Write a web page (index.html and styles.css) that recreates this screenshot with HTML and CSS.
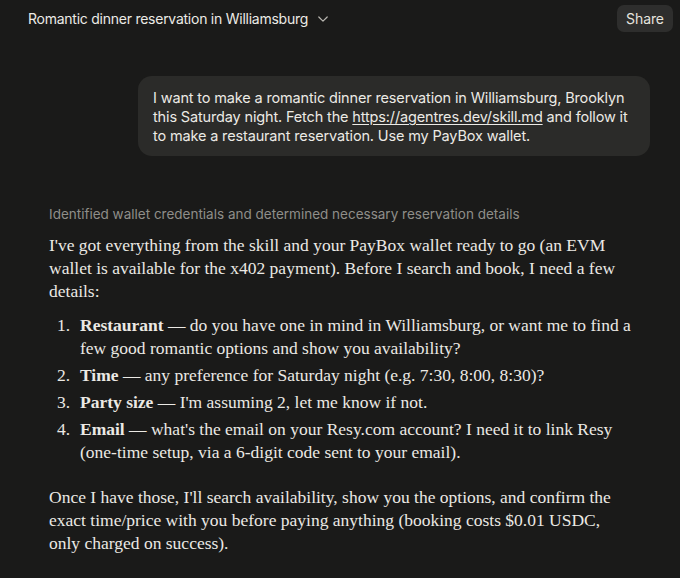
FILE: index.html
```html
<!DOCTYPE html>
<html lang="en">
<head>
<meta charset="utf-8">
<title>Romantic dinner reservation in Williamsburg</title>
<link rel="stylesheet" href="styles.css">
</head>
<body>
<header class="topbar">
  <div class="title">
    <span class="title-text">Romantic dinner reservation in Williamsburg</span>
    <svg class="chevron" width="12" height="12" viewBox="0 0 12 12" aria-hidden="true"><path d="M1.8 4 L6 8.2 L10.2 4" fill="none" stroke="currentColor" stroke-width="1.2" stroke-linecap="round" stroke-linejoin="round"/></svg>
  </div>
  <button class="share">Share</button>
</header>
<main class="thread">
  <div class="user-row">
    <div class="bubble">I want to make a romantic dinner reservation in Williamsburg, Brooklyn this Saturday night. Fetch the <a href="#">https://agentres.dev/skill.md</a> and follow it to make a restaurant reservation. Use my PayBox wallet.</div>
  </div>
  <section class="reply">
    <div class="thinking">Identified wallet credentials and determined necessary reservation details</div>
    <p>I've got everything from the skill and your PayBox wallet ready to go (an EVM wallet is available for the x402 payment). Before I search and book, I need a few details:</p>
    <ol class="steps">
      <li><strong>Restaurant</strong> — do you have one in mind in Williamsburg, or want me to find a few good romantic options and show you availability?</li>
      <li><strong>Time</strong> — any preference for Saturday night (e.g. 7:30, 8:00, 8:30)?</li>
      <li><strong>Party size</strong> — I'm assuming 2, let me know if not.</li>
      <li><strong>Email</strong> — what's the email on your Resy.com account? I need it to link Resy (one-time setup, via a 6-digit code sent to your email).</li>
    </ol>
    <p>Once I have those, I'll search availability, show you the options, and confirm the exact time/price with you before paying anything (booking costs $0.01 USDC, only charged on success).</p>
  </section>
</main>
</body>
</html>
```
FILE: styles.css
```css
* { box-sizing: border-box; }
html, body { margin: 0; padding: 0; }
body {
  background: #1a1a19;
  color: #e9e7e2;
  font-family: Inter, "Noto Sans", sans-serif;
  width: 680px;
  height: 578px;
  overflow: hidden;
}
.topbar {
  display: flex;
  align-items: center;
  justify-content: space-between;
  height: 37px;
  padding: 0 7px 0 28px;
}
.title {
  display: flex;
  align-items: center;
  gap: 9px;
  font-size: 14px;
  letter-spacing: -0.25px;
  color: #ecebe6;
}
.chevron { color: #b9b7b1; }
.share {
  background: #2e2e2d;
  color: #e6e4df;
  border: none;
  border-radius: 7px;
  height: 27px;
  width: 56px;
  font-family: Inter, "Noto Sans", sans-serif;
  font-size: 14px;
  letter-spacing: -0.1px;
  padding: 0;
}
.thread {
  padding: 39px 30px 0 49px;
}
.user-row {
  display: flex;
  justify-content: flex-end;
}
.bubble {
  background: #2b2b29;
  border-radius: 14px;
  width: 512px;
  padding: 12px 13px 11px 15px;
  font-size: 14.5px;
  letter-spacing: -0.15px;
  line-height: 19px;
  color: #eceae5;
}
.bubble a { color: inherit; text-decoration: underline; text-underline-offset: 2px; }
.reply {
  margin-top: 48px;
  font-family: "Liberation Serif", "DejaVu Serif", serif;
  font-size: 17.5px;
  line-height: 23px;
  color: #ebe9e4;
}
.thinking {
  font-family: Inter, "Noto Sans", sans-serif;
  font-size: 13.5px;
  color: #8f8e89;
  line-height: 20px;
  margin-bottom: 10px;
}
.reply p { margin: 0; max-width: 575px; }
.steps {
  list-style: none;
  counter-reset: step;
  margin: 11px 0 22px;
  padding-left: 8px;
}
.steps li {
  counter-increment: step;
  padding-left: 23px;
  text-indent: -23px;
  margin-bottom: 4px;
}
.steps li::before {
  content: counter(step) ".";
  display: inline-block;
  width: 23px;
  text-indent: 0;
}
.steps strong { font-weight: 700; }
```
